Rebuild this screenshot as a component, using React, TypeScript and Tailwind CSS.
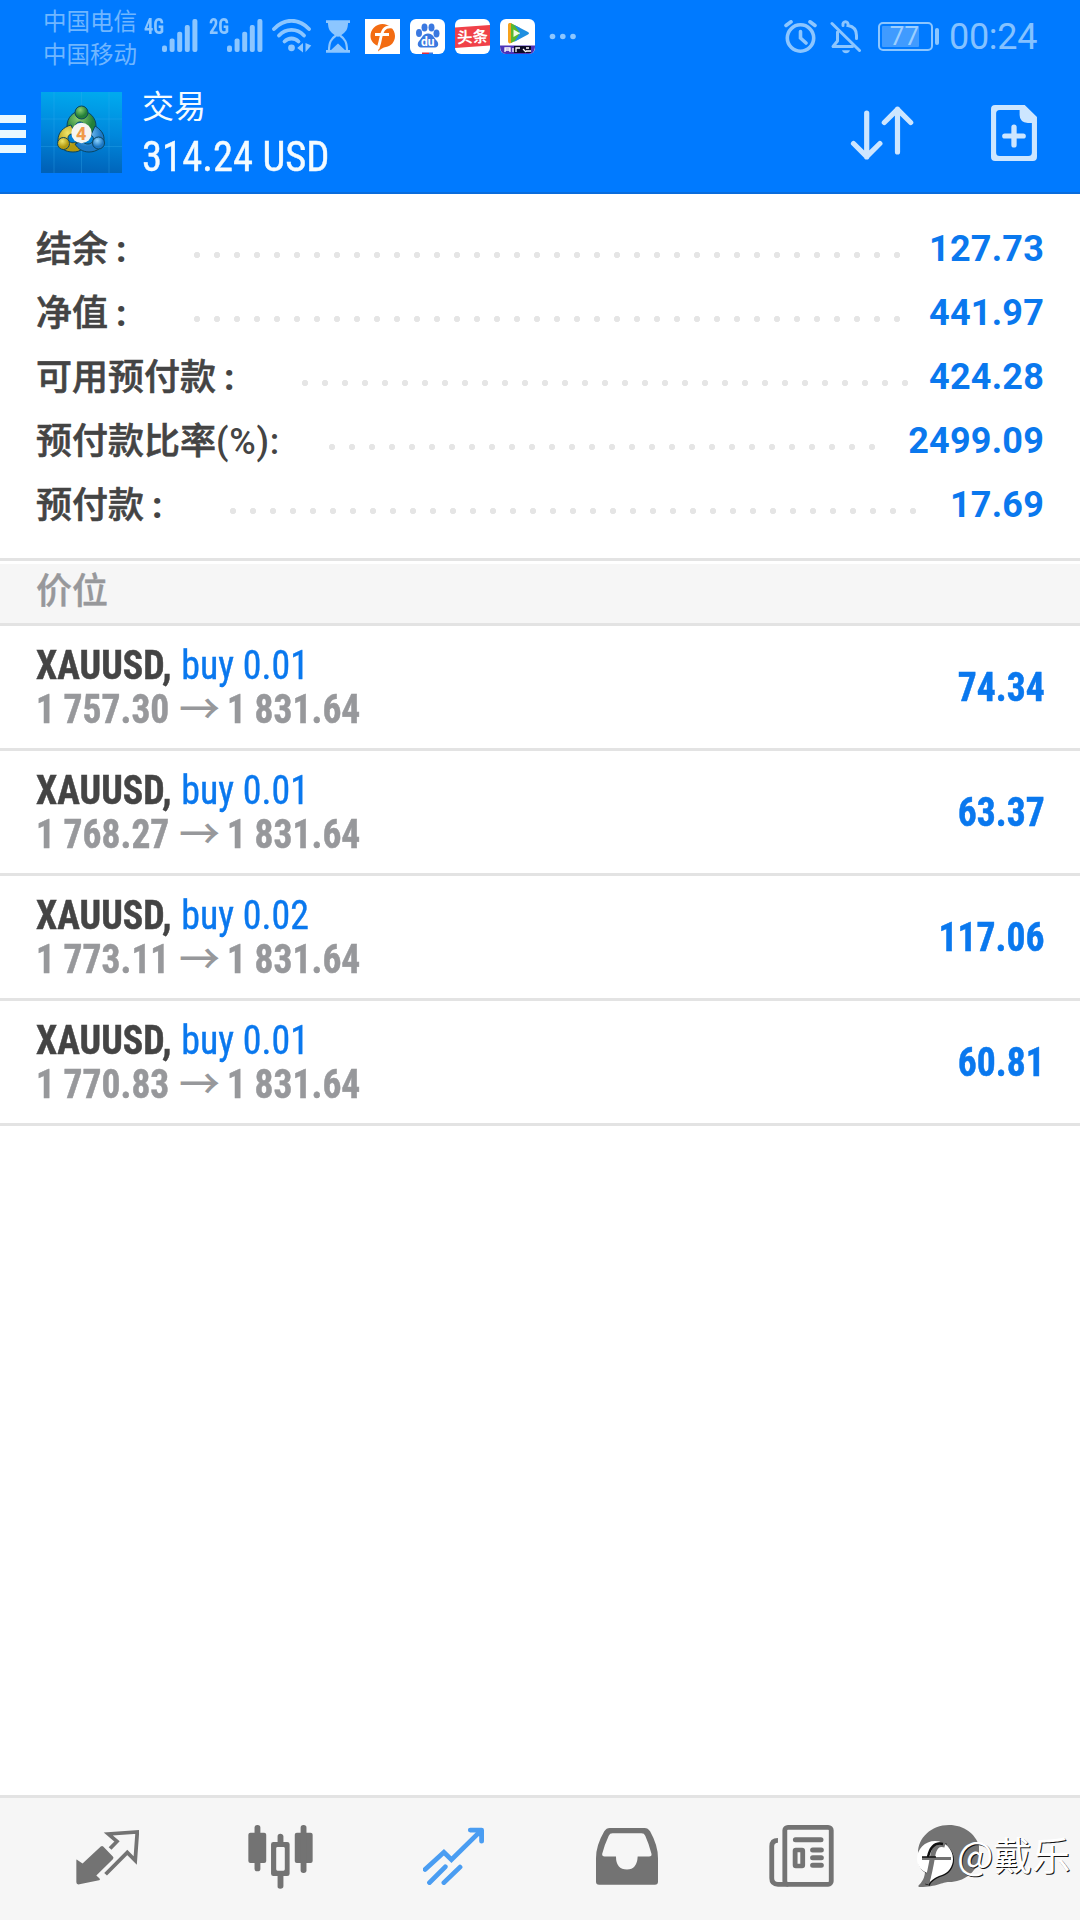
import type { ReactNode } from "react";

interface SummaryItem {
  label: string;
  suffix: string;
  value: string;
  labelWidth: number;
  dots: number;
}

interface Position {
  symbol: string;
  side: string;
  open: string;
  current: string;
  profit: string;
}

const summary: SummaryItem[] = [
  { label: "结余", suffix: ":", value: "127.73", labelWidth: 151, dots: 36 },
  { label: "净值", suffix: ":", value: "441.97", labelWidth: 151, dots: 36 },
  { label: "可用预付款", suffix: ":", value: "424.28", labelWidth: 259, dots: 31 },
  { label: "预付款比率", suffix: "(%):", value: "2499.09", labelWidth: 286, dots: 28 },
  { label: "预付款", suffix: ":", value: "17.69", labelWidth: 187, dots: 35 },
];

const positions: Position[] = [
  { symbol: "XAUUSD,", side: "buy 0.01", open: "1 757.30", current: "1 831.64", profit: "74.34" },
  { symbol: "XAUUSD,", side: "buy 0.01", open: "1 768.27", current: "1 831.64", profit: "63.37" },
  { symbol: "XAUUSD,", side: "buy 0.02", open: "1 773.11", current: "1 831.64", profit: "117.06" },
  { symbol: "XAUUSD,", side: "buy 0.01", open: "1 770.83", current: "1 831.64", profit: "60.81" },
];

function SignalBars() {
  return (
    <svg className="mt-[19px] h-[33px] w-[36px]" viewBox="0 0 36 33" fill="#8cc6ff">
      <rect x="0" y="26.5" width="5" height="6.5" rx="2" />
      <rect x="7.6" y="19.5" width="5" height="13.5" rx="2" />
      <rect x="15.2" y="12.8" width="5" height="20.2" rx="2" />
      <rect x="22.8" y="6" width="5" height="27" rx="2" />
      <rect x="30.4" y="0" width="5" height="33" rx="2" />
    </svg>
  );
}

function Signal({ kind, className }: { kind: string; className: string }) {
  return (
    <div className={`flex ${className}`}>
      <span className="mt-[15px] w-[18px] origin-left scale-x-[0.86] font-['Roboto_Condensed',sans-serif] text-[21.5px] leading-6 font-bold text-[#8cc6ff]">
        {kind}
      </span>
      <SignalBars />
    </div>
  );
}

function AppBadge({ children, className }: { children: ReactNode; className: string }) {
  return (
    <svg className={`mt-[19px] size-[35px] ${className}`} viewBox="0 0 35 35">
      {children}
    </svg>
  );
}

function StatusBar() {
  return (
    <div className="flex h-[74px] items-start pl-[43px]">
      <div className="flex w-[101px] flex-col pt-[4px] font-['Noto_Sans_CJK_SC',sans-serif] text-[23.5px] leading-[33px] font-normal whitespace-nowrap text-[#70b6ff]">
        <span>中国电信</span>
        <span>中国移动</span>
      </div>
      <Signal kind="4G" className="" />
      <Signal kind="2G" className="ml-[11px]" />
      <svg className="mt-[19px] ml-[9px] h-[34px] w-[40px]" viewBox="0 0 40 34" fill="none" stroke="#8cc6ff" strokeWidth="3.8" strokeLinecap="round">
        <path d="M2 10C12-1 27-1 37 10" />
        <path d="M7 16.5c7-7.4 18-7.4 25 0" />
        <path d="M12.5 22.5c4-4 10-4 14 0" />
        <circle cx="19.5" cy="28.8" r="3.4" fill="#8cc6ff" stroke="none" />
        <path d="M31 24v9.500l-5.800-4.500zM33.500 33V24l5.800 2.500z" fill="#8cc6ff" stroke="none" />
      </svg>
      <svg className="mt-5 ml-[13px] h-[33px] w-[26px]" viewBox="0 0 26 33" fill="none" stroke="#8cc6ff">
        <path d="M1 1.600h24M1 31.400h24" strokeWidth="2.600" />
        <path d="M4 1.500c0 8 2 10 7.500 13.500C6 19 4 22 4 31M22 1.500c0 8-2 10-7.500 13.500C20 19 22 22 22 31" strokeWidth="2.200" />
        <path d="M4 2h18c0 7-2.500 10-9 15C6.500 12 4 9 4 2z" fill="#8cc6ff" stroke="none" />
        <path d="M5 31l8-7.500 8 7.500z" fill="#8cc6ff" stroke="none" />
      </svg>
      <AppBadge className="ml-[14px]">
        <rect width="35" height="35" fill="#fff" />
        <path d="M17.500 5C24 5 30 10 30 17c0 6-4 10-9 11-3 .8-5 1.500-8 4.500 1-3 .5-5-1-6C8 24.500 5.500 21 5.500 17 5.500 10 11 5 17.500 5z" fill="#f36c12" />
        <path d="M27 8c-8-1-10 4-11.500 12-.6 4-1.800 7-2.700 10M10 15.500h14" fill="none" stroke="#fff" strokeWidth="2.800" />
      </AppBadge>
      <AppBadge className="ml-[10px]">
        <rect width="35" height="35" rx="6" fill="#fff" />
        <g fill="#3a78e0">
          <ellipse cx="9" cy="14" rx="3" ry="4" />
          <ellipse cx="14.500" cy="8.500" rx="3" ry="4" />
          <ellipse cx="21.500" cy="8.500" rx="3" ry="4" />
          <ellipse cx="26.500" cy="14.500" rx="3" ry="4" />
          <path d="M18 14.500c5 0 6 4.500 8.500 7s2.500 6.500-1.500 7H11c-4-.5-4-4.500-1.500-7s3.500-7 8.500-7z" />
        </g>
        <path d="M12 33.500h7V35h-7z" fill="#e02d3c" />
        <path d="M19 33.500h4V35h-4z" fill="#3a78e0" />
        <text x="17.800" y="27" textAnchor="middle" fill="#fff" fontSize="12" fontWeight="700" fontFamily="Roboto, sans-serif">du</text>
      </AppBadge>
      <AppBadge className="ml-[10px]">
        <rect width="35" height="35" rx="6" fill="#fff" />
        <path d="M0 8.500 35 6v20.500L0 29z" fill="#f04149" />
        <text x="17.500" y="23.500" textAnchor="middle" fill="#fff" fontSize="15.500" fontWeight="700" fontFamily="Noto Sans CJK SC, sans-serif" transform="rotate(-3 17 18)">头条</text>
      </AppBadge>
      <AppBadge className="ml-[10px]">
        <rect width="35" height="35" rx="6" fill="#fff" />
        <path d="M8 6c0-2 2-2.500 3.500-1.500L15 6.500v15L11 24c-1.500 1-3 0-3-2z" fill="#f7a11b" />
        <path d="M11 4.300l9 4.700-1 11-8 4z" fill="#57b82e" />
        <path d="M14 5.800l13.500 7c2 1 2 2 0 3L14 23l6-9z" fill="#1f8fe0" />
        <path d="M13.500 10.500l6.500 3.700-6.500 3.700z" fill="#f2fae0" />
        <path d="M0 26.500h35c0 5-2 8.500-6 8.500H6c-4 0-6-3.500-6-8.500z" fill="#4c33b8" />
        <path d="M14 27h17v7H14z" fill="#0d0b2a" />
        <path d="M5 33v-4h5v4M5 31h5M13 29v4M16 33v-4h4M23 30l3 3M29 29h-3M26 32h5" fill="none" stroke="#fff" strokeWidth="1.300" />
      </AppBadge>
      <svg className="mt-[33px] ml-[14px] h-[7px] w-[28px]" viewBox="0 0 28 7" fill="#8cc6ff">
        <circle cx="3.500" cy="3.500" r="2.800" />
        <circle cx="13.800" cy="3.500" r="2.800" />
        <circle cx="24" cy="3.500" r="2.800" />
      </svg>

      <svg className="mt-5 ml-[207px] h-[34px] w-[34px]" viewBox="0 0 34 34" fill="none" stroke="#8cc6ff" strokeWidth="3.600" strokeLinecap="round">
        <circle cx="16.500" cy="18" r="13.200" />
        <path d="M16.500 11.500V18l5.500 5M2 5.500 7 1.800M31 5.500l-5-3.700" />
      </svg>
      <svg className="mt-5 ml-[12px] h-[34px] w-[32px]" viewBox="0 0 32 34" fill="none" stroke="#8cc6ff" strokeWidth="3" strokeLinecap="round">
        <path d="M2 3.500 29.500 30.500" />
        <path d="M13 5.500c-1-5 6-5 5 0 6 1 8.500 5 8.500 10v3" />
        <path d="M7.500 12v9L3 26.500h19.500" strokeLinejoin="round" />
        <path d="M12 30.200h8c-1 4-7 4-8 0z" fill="#8cc6ff" stroke="none" />
      </svg>
      <div className="mt-[22px] ml-[16px] flex h-[29px] w-[55px] rounded-[5px] border-2 border-[#8cc6ff] p-[2px]">
        <div className="flex h-[21px] w-[37px] items-center justify-end rounded-[1px] bg-[#409bff]">
          <span className="font-['Roboto',sans-serif] text-[26px] leading-[21px] font-normal text-[#9ccfff]">77</span>
        </div>
      </div>
      <div className="mt-[28px] ml-[2px] h-[17px] w-[4px] rounded-[2px] bg-[#8cc6ff]" />
      <span className="mt-[16px] ml-[10px] font-['Roboto',sans-serif] text-[36px] leading-[43px] font-normal tracking-[-0.300px] text-[#85c2ff]">00:24</span>
    </div>
  );
}

function AppLogo() {
  return (
    <svg className="mt-[18px] ml-[15px] size-[81px]" viewBox="0 0 81 81">
      <defs>
        <linearGradient id="bg" x1="0.6" y1="0" x2="0.5" y2="1">
          <stop offset="0" stopColor="#00a9ee" />
          <stop offset="0.5" stopColor="#0088dc" />
          <stop offset="1" stopColor="#0062b8" />
        </linearGradient>
        <radialGradient id="green" cx="0.4" cy="0.3">
          <stop offset="0" stopColor="#8fd070" />
          <stop offset="1" stopColor="#23803a" />
        </radialGradient>
        <radialGradient id="yellow" cx="0.4" cy="0.3">
          <stop offset="0" stopColor="#f0e66a" />
          <stop offset="1" stopColor="#b39a10" />
        </radialGradient>
        <radialGradient id="sky" cx="0.4" cy="0.3">
          <stop offset="0" stopColor="#8fd4ff" />
          <stop offset="1" stopColor="#1c78c6" />
        </radialGradient>
      </defs>
      <rect width="81" height="81" fill="url(#bg)" />
      <path d="M13 0v81M40.500 0v81M68 0v81M0 27h81M0 54.500h81" stroke="#35b0ee" strokeOpacity="0.3" />
      <g strokeWidth="1" stroke="#0b4560">
        <path d="M40 19c9 0 15 7 15 15 0 5-2 8-4 10l-8-6c2-5-1-8-4-8s-6 3-4 8l-6 5c-2-3-3-6-3-9 0-8 6-15 14-15z" fill="url(#green)" />
        <path d="M30 33c-8 2-13 8-13 15 0 8 7 12 15 12 4 0 7-1 9-3l-6-7c-4 2-8 0-8-4 0-3 3-5 7-4z" fill="url(#yellow)" />
        <path d="M54 34c5 3 9 7 9 13 0 8-7 13-15 13-6 0-11-3-14-8l7-3c3 4 9 4 11 0 1-3 0-5-2-6z" fill="url(#sky)" />
        <circle cx="40.500" cy="20.500" r="6.500" fill="url(#green)" />
        <circle cx="22.500" cy="51.500" r="6" fill="url(#yellow)" />
        <circle cx="57.500" cy="51" r="6" fill="url(#sky)" />
      </g>
      <circle cx="40.500" cy="41" r="10.200" fill="#f5f5f2" />
      <text x="40.200" y="47.500" textAnchor="middle" fontSize="18" fontWeight="800" fontFamily="Roboto, sans-serif" fill="#f09a4a">4</text>
    </svg>
  );
}

function Header() {
  return (
    <header className="h-[194px] border-b-2 border-[#0a6cdc] bg-[#007aff]">
      <StatusBar />
      <div className="flex items-start">
        <div className="mt-[41px] flex w-[26px] flex-col gap-[7.500px]">
          <div className="h-[7.500px] bg-[#e9f8ff]" />
          <div className="h-[7.500px] bg-[#e9f8ff]" />
          <div className="h-[7.500px] bg-[#e9f8ff]" />
        </div>
        <AppLogo />
        <div className="ml-[20px] flex flex-1 flex-col items-start text-[#f4fbff]">
          <span className="mt-[8px] font-['Noto_Sans_CJK_SC',sans-serif] text-[32px] leading-[44px] font-normal">交易</span>
          <span className="mt-[8px] origin-left scale-x-[0.968] font-['Roboto_Condensed',sans-serif] text-[42px] leading-[46px] [-webkit-text-stroke:0.400px_#f4fbff]">314.24 USD</span>
        </div>
        <svg className="mt-[32px] h-[56px] w-[64px]" viewBox="0 0 64 56" fill="none" stroke="#cde6ff" strokeWidth="5.200" strokeLinecap="round" strokeLinejoin="round">
          <path d="M16.700 7v44M3.500 37.500l13.200 13.200 13.200-13.200" />
          <path d="M47.500 46V3M34.300 16.500 47.500 3.300l13.200 13.200" />
        </svg>
        <svg className="mt-[30px] mr-[42px] ml-[76px] h-[58px] w-[48px]" viewBox="0 0 47 58" preserveAspectRatio="none">
          <path d="M5 1h29l12 12v40q0 4-4 4H5q-4 0-4-4V5q0-4 4-4zm4.500 5Q6 6 6 9.500v39Q6 52 9.500 52h28q3.500 0 3.500-3.500V19h-4q-8-1-8-8V6z" fill="#cde6ff" fillRule="evenodd" />
          <path d="M23.500 23v18M14.500 32h18" stroke="#cde6ff" strokeWidth="5.200" strokeLinecap="round" />
        </svg>
      </div>
    </header>
  );
}

function SummaryRow({ item }: { item: SummaryItem }) {
  return (
    <div className="flex h-16 items-center">
      <div
        className="mt-[2px] flex shrink-0 items-center font-['Roboto','Noto_Sans_CJK_SC',sans-serif] text-[36px] leading-[64px] font-medium whitespace-nowrap text-[#444]"
        style={{ width: item.labelWidth }}
      >
        <span className="[-webkit-text-stroke:0.600px_#444]">{item.label}</span>
        {item.suffix === ":" ? (
          <span className="pl-[8px] font-extrabold">{item.suffix}</span>
        ) : (
          <span className="tracking-[0.700px]">{item.suffix}</span>
        )}
      </div>
      <div
        className="mt-[11px] h-[8px] bg-[radial-gradient(circle,#e5e5e5_2.800px,transparent_3.500px)] bg-[length:20px_8px]"
        style={{ width: item.dots * 20 }}
      />
      <span className="ml-auto font-['Roboto',sans-serif] text-[36px] font-bold tracking-[0.200px] text-[#0a78ee]">
        {item.value}
      </span>
    </div>
  );
}

function PositionRow({ item }: { item: Position }) {
  return (
    <div className="flex h-[125px] items-center justify-between border-b-[3px] border-[#e3e3e3] pr-[35px] pl-9 font-['Roboto_Condensed',sans-serif] text-[41px] leading-[44px]">
      <div className="flex flex-col">
        <div className="flex origin-left scale-x-[0.924] gap-[10.500px]">
          <span className="font-bold text-[#444] [-webkit-text-stroke:0.500px_#444]">{item.symbol}</span>
          <span className="text-[#0a78ee] [-webkit-text-stroke:0.400px_#0a78ee]">{item.side}</span>
        </div>
        <div className="flex font-bold text-[#97989b]">
          <span className="w-[143px] origin-left scale-x-[0.915] whitespace-nowrap [-webkit-text-stroke:0.500px_#97989b]">
            {item.open}
          </span>
          <span className="-mt-[3px] w-[48px] font-['Noto_Sans_CJK_SC',sans-serif] font-medium">→</span>
          <span className="origin-left scale-x-[0.915] whitespace-nowrap [-webkit-text-stroke:0.500px_#97989b]">
            {item.current}
          </span>
        </div>
      </div>
      <span className="origin-right scale-x-[0.917] font-bold text-[#0a78ee] [-webkit-text-stroke:0.500px_#0a78ee]">
        {item.profit}
      </span>
    </div>
  );
}

function BottomNav() {
  return (
    <nav className="relative flex h-[125px] items-start border-t-[3px] border-[#e3e3e3] bg-[#f6f6f6] text-[#737373]">
      <svg className="mt-[32px] ml-[76px] h-[55px] w-[63px]" viewBox="221 150 183 164" preserveAspectRatio="none">
        <path d="M222 240q0-4 4 0l14 10 53-51q4-3 7 0l28 30q4 4 0 8l-48 49 8 7q5 5 0 7l-57 12q-9 2-9-6z" fill="currentColor" />
        <path d="M320 205l20-21-25-22 84-6-6 85-23-24-63 65" fill="none" stroke="currentColor" strokeWidth="11" />
      </svg>
      <svg className="mt-[27px] ml-[109px] h-[64px] w-[65px]" viewBox="719 135 189 192" preserveAspectRatio="none" fill="currentColor">
        <rect x="720" y="158" width="52" height="91" rx="6" />
        <rect x="738" y="135" width="17" height="139" rx="8" />
        <rect x="855" y="158" width="52" height="91" rx="6" />
        <rect x="872" y="135" width="17" height="144" rx="8" />
        <path d="M793 186h12v-17q0-8 8-8t9 8v17h11q7 0 7 7v88q0 7-7 7h-11v30q0 8-9 8t-8-8v-30h-12q-7 0-7-7v-88q0-7 7-7zm12 15q-4 0-4 4v63q0 4 4 4h17q4 0 4-4v-63q0-4-4-4z" fillRule="evenodd" />
      </svg>
      <svg className="mt-[29px] ml-[110px] h-[58px] w-[61px]" viewBox="1227 142 178 172" preserveAspectRatio="none" fill="none" stroke="#4a9df2" strokeWidth="14">
        <path d="M1233 268l55-51 22 22 84-84" strokeLinecap="round" strokeLinejoin="miter" />
        <path d="M1365 151h33v33" strokeLinecap="round" strokeLinejoin="round" />
        <path d="M1375 151h23v25z" fill="#4a9df2" stroke="none" />
        <path d="M1246 307l46-47M1288 307l47-46" strokeLinecap="round" />
      </svg>
      <svg className="mt-[30px] ml-[112px] h-[57px] w-[62px]" viewBox="163 143 180 170" preserveAspectRatio="none" fill="currentColor">
        <path d="M203 143h101q10 0 16 10 23 42 23 80v70q0 9-9 9H172q-9 0-9-9v-70q0-38 24-80 6-10 16-10zm8 16q-8 0-11 7-12 26-19 54-1 8 7 8h33q0 39 32 39 29 0 31-39h33q9 0 7-8-7-29-18-54-3-7-11-7z" fillRule="evenodd" />
      </svg>
      <svg className="mt-[27px] ml-[111px] h-[62px] w-[65px]" viewBox="665 135 189 186" preserveAspectRatio="none">
        <g fill="none" stroke="currentColor" strokeWidth="14">
          <rect x="711" y="142" width="135" height="171" rx="9" />
          <path d="M691 181q-18 0-18 18v96q0 18 18 18h30" />
          <rect x="741" y="210" width="22" height="48" rx="2" />
          <path d="M742 179h74M792 210h25M792 233h25M792 256h25" strokeLinecap="round" strokeWidth="15" />
        </g>
      </svg>
      <svg className="mt-[27px] ml-[84px] h-[62px] w-[61px]" viewBox="0 0 61 62" fill="currentColor">
        <path d="M31 0c18 0 31 13 31 28S49 57 31 57c-7 0-12 5-29 5-2 0-2-1-1-2 5-5 6-10 6-14C3 42 0 36 0 28 0 13 13 0 31 0z" />
      </svg>

      {/* author watermark */}
      <div className="absolute top-[26px] left-[915px] flex items-start text-white">
        <svg className="mt-[13px] h-[50px] w-[42px] drop-shadow-[1px_1px_0_#111]" viewBox="0 0 42 50">
          <path d="M20 4c10 0 18 8 18 18 0 8-5 14-11 16-4 1-8 3-13 8 1-4 2-7 1-9C7 35 2 29 2 22 2 12 10 4 20 4z" fill="#fff" />
          <path d="M30 8c-8-2-11 3-12.500 12-1.500 9-3 17-6 27" fill="none" stroke="#737373" strokeWidth="5" />
          <path d="M28 7c-9-2-13 4-15 13" fill="none" stroke="#111" strokeWidth="2.500" />
          <path d="M7 21.500h29" stroke="#737373" strokeWidth="3" />
          <path d="M7 20h14" stroke="#111" strokeWidth="1.500" />
        </svg>
        <span className="font-['Noto_Sans_CJK_SC',sans-serif] text-[38.500px] leading-[58px] font-normal [text-shadow:1px_1px_0_#111]">@戴乐</span>
      </div>
    </nav>
  );
}

export default function App() {
  return (
    <div className="flex h-[1920px] w-[1080px] flex-col overflow-hidden bg-white">
      <Header />
      <section className="h-[367px] border-b-[3px] border-[#e3e3e3] px-9 pt-[23px]">
        {summary.map((item) => (
          <SummaryRow key={item.label} item={item} />
        ))}
      </section>
      <h2 className="mt-[3px] flex h-[62px] items-center border-b-[3px] border-[#e3e3e3] bg-[#f6f6f6] pb-[11px] pl-9 font-['Noto_Sans_CJK_SC',sans-serif] text-[36px] leading-none font-medium text-[#97989b] [-webkit-text-stroke:0.400px_#97989b]">
        价位
      </h2>
      <main className="flex-1">
        {positions.map((item) => (
          <PositionRow key={item.open} item={item} />
        ))}
      </main>
      <BottomNav />
    </div>
  );
}
